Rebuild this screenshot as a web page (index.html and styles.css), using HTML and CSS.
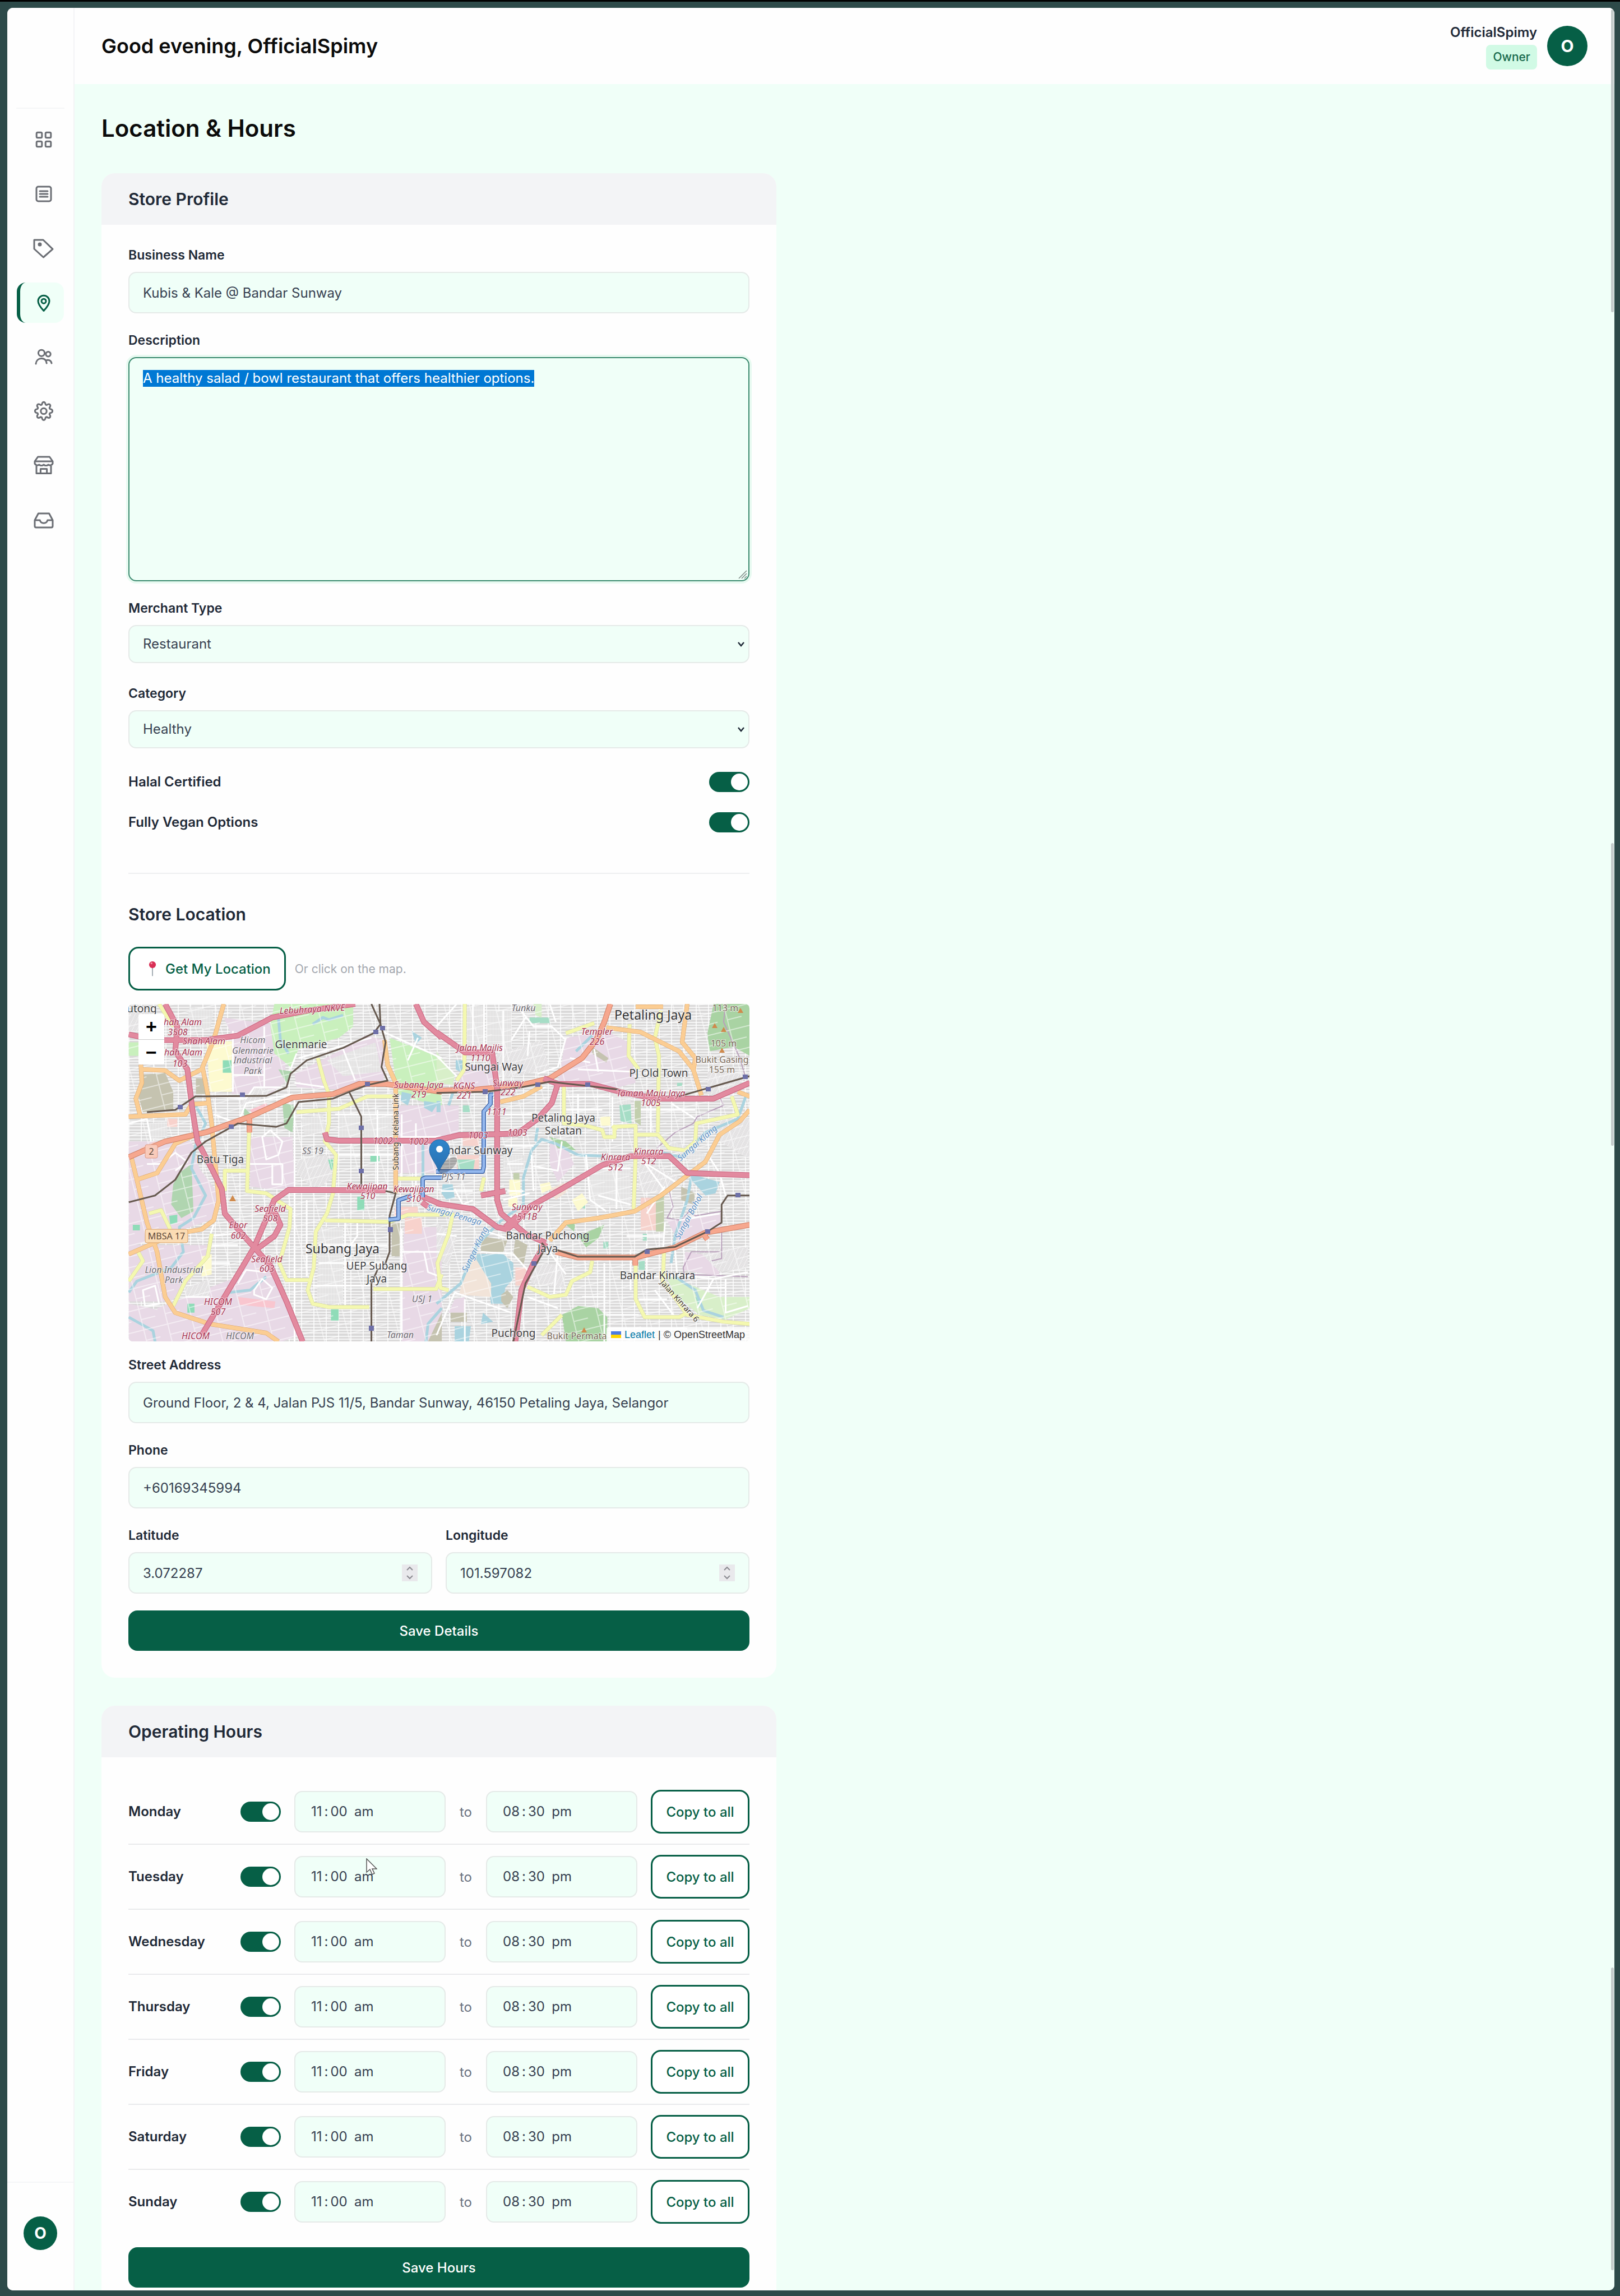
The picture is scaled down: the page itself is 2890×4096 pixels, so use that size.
FILE: index.html
```html
<!DOCTYPE html>
<html lang="en">
<head>
<meta charset="utf-8">
<title>Location &amp; Hours</title>
<link rel="stylesheet" href="styles.css">
</head>
<body>
<div class="window">
  <aside class="sidebar">
    <div class="sidebar-top"></div>
    <nav class="nav" aria-label="Main">
      <a class="nav-item" href="#dashboard" aria-label="Dashboard"><svg class="icon" viewBox="0 0 20 20"><rect x="3.600" y="3.600" width="4.800" height="4.800" rx="1"/><rect x="11.600" y="3.600" width="4.800" height="4.800" rx="1"/><rect x="3.600" y="11.600" width="4.800" height="4.800" rx="1"/><rect x="11.600" y="11.600" width="4.800" height="4.800" rx="1"/></svg></a>
      <a class="nav-item" href="#orders" aria-label="Orders"><svg class="icon" viewBox="0 0 20 20"><rect x="3.500" y="3.500" width="13" height="13" rx="1.600"/><path d="M6.500 7.500h7M6.500 10h7M6.500 12.500h7"/></svg></a>
      <a class="nav-item" href="#deals" aria-label="Deals"><svg class="icon" viewBox="0 0 20 20"><path d="M1.500 2.500h8l8.500 8.200-8.300 7.300-8.200-7.500z"/><circle cx="6.500" cy="6.500" r="1" class="dot"/></svg></a>
      <a class="nav-item active" href="#location" aria-label="Location" aria-current="page"><svg class="icon" viewBox="0 0 20 20"><path d="M10 17.200C7 14 5 11.300 5 8.600a5 5 0 0 1 10 0c0 2.700-2 5.400-5 8.600z"/><circle cx="10" cy="8.600" r="2"/></svg></a>
      <a class="nav-item" href="#team" aria-label="Team"><svg class="icon" viewBox="0 0 20 20"><circle cx="8" cy="6.400" r="2.800"/><circle cx="14" cy="7.400" r="2.100"/><path d="M3 16c.3-3 2.300-4.700 5-4.700 2.600 0 4.300 1.600 4.600 4.200M11.800 13.200c2-1.200 4.700-.6 5.200 2.300"/></svg></a>
      <a class="nav-item" href="#settings" aria-label="Settings"><svg class="icon" viewBox="0 0 20 20"><path d="M8.300 3.900C8.600 2.200 9 1.600 10 1.600s1.400.6 1.700 2.300l.9.400c1.400-1 2.200-1.100 2.900-.4s.6 1.500-.4 2.900l.4.900c1.700.3 2.300.9 2.300 1.900s-.6 1.600-2.300 1.900l-.4.900c1 1.400 1.100 2.200.4 2.900s-1.500.6-2.900-.4l-.9.400c-.3 1.700-.7 2.500-1.700 2.500s-1.400-.8-1.700-2.500l-.9-.4c-1.400 1-2.200 1.100-2.900.4s-.6-1.500.4-2.900l-.4-.9c-1.700-.3-2.300-.9-2.300-1.900s.6-1.600 2.300-1.900l.4-.9c-1-1.400-1.100-2.200-.4-2.900s1.500-.6 2.900.4z"/><circle cx="10" cy="9.700" r="2.600"/></svg></a>
      <a class="nav-item" href="#store" aria-label="Store"><svg class="icon" viewBox="0 0 20 20"><path d="M2 6l2.800-4h10.400L18 6v2a2.600 2.600 0 0 1-3.900 1 3.200 3.200 0 0 1-4.100 0 3.200 3.200 0 0 1-4.100 0A2.600 2.600 0 0 1 2 8zM2 6h16M3.500 9.500v7.300h13V9.500M7.200 16.800v-4h5.600v4"/></svg></a>
      <a class="nav-item" href="#inbox" aria-label="Inbox"><svg class="icon" viewBox="0 0 20 20"><path d="M2 10l3.200-6h9.600L18 10v5.200c0 .8-.5 1.300-1.300 1.300H3.300C2.500 16.500 2 16 2 15.200zM2 10h4.600c.4 1.700 1.400 2.600 3.400 2.600s3-.9 3.400-2.600H18"/></svg></a>
    </nav>
    <div class="sidebar-foot"><span class="avatar small">O</span></div>
  </aside>

  <div class="page">
    <header class="topbar">
      <p class="greeting">Good evening, OfficialSpimy</p>
      <div class="account">
        <div class="account-text">
          <span class="account-name">OfficialSpimy</span>
          <span class="badge">Owner</span>
        </div>
        <span class="avatar">O</span>
      </div>
    </header>

    <main class="content">
      <h1>Location &amp; Hours</h1>

      <section class="card">
        <h2 class="card-head">Store Profile</h2>
        <form class="card-body profile">
          <div class="field"><label for="name">Business Name</label><input class="control" id="name" type="text" value="Kubis &amp; Kale @ Bandar Sunway"></div>
          <div class="field"><label for="desc">Description</label><div class="area-wrap"><textarea class="control textarea" id="desc" spellcheck="false">A healthy salad / bowl restaurant that offers healthier options.</textarea><svg class="grip" viewBox="0 0 16 16"><path d="M1 15L15 1M6 15l9-9M11 15l4-4"/></svg></div></div>
          <div class="field pick"><label for="type">Merchant Type</label><div class="select-wrap"><select class="control select" id="type"><option>Restaurant</option></select><svg class="chevron" viewBox="0 0 14 12"><path d="M2 3l5 6 5-6"/></svg></div></div>
          <div class="field pick"><label for="cat">Category</label><div class="select-wrap"><select class="control select" id="cat"><option>Healthy</option></select><svg class="chevron" viewBox="0 0 14 12"><path d="M2 3l5 6 5-6"/></svg></div></div>
          <div class="switch-row"><label for="halal">Halal Certified</label><input class="toggle" id="halal" type="checkbox" checked></div>
          <div class="switch-row"><label for="vegan">Fully Vegan Options</label><input class="toggle" id="vegan" type="checkbox" checked></div>

          <h3 class="section-title">Store Location</h3>
          <div class="locate">
            <button class="btn outline locate-btn" type="button"><svg class="pin" viewBox="0 0 16 32"><path d="M8 14v17" stroke="#9aa3ab" stroke-width="2"/><circle cx="8" cy="8" r="7" fill="#d92f55"/><circle cx="6" cy="5" r="2" fill="#f08fa2"/></svg>Get My Location</button>
            <span class="hint">Or click on the map.</span>
          </div>

          <div class="map">
            <svg class="map-art" viewBox="0 0 1108 602" preserveAspectRatio="xMidYMid slice" role="img" aria-label="Map of Bandar Sunway">
              <defs>
                <pattern id="st1" width="22" height="16" patternUnits="userSpaceOnUse"><rect width="22" height="16" fill="#dad9d9"/><path d="M0 1h22M0 6h22M0 11h22M1 0v16" stroke="#fff" stroke-width="1.500"/></pattern>
                <pattern id="st2" width="14" height="28" patternUnits="userSpaceOnUse"><rect width="14" height="28" fill="#dad9d9"/><path d="M2 0v28M7 0v28M12 0v28M0 1h14" stroke="#fff" stroke-width="1.500"/></pattern>
                <pattern id="st3" width="20" height="18" patternUnits="userSpaceOnUse" patternTransform="rotate(28)"><rect width="20" height="18" fill="#dddbdc"/><path d="M0 1h20M0 7h20M0 13h20M1 0v18" stroke="#fff" stroke-width="1.500"/></pattern>
                <pattern id="st4" width="44" height="38" patternUnits="userSpaceOnUse" patternTransform="rotate(-14)"><path d="M0 1h44M18 0v38M18 20h26" stroke="#fff" stroke-width="2" fill="none"/></pattern>
                <g id="minor">
                  <g transform="matrix(.3607 0 0 .402 -6.5 -12)"><path d="M535 150V420M535 345H690M690 130V400M410 440L600 450 640 400 780 400M850 250L820 320M860 270L1220 180M840 380L1000 400M1080 230L1140 370M1270 150L1568 270M1450 180L1400 280M560 560L600 470 830 430M440 520L560 560M20 560L110 540 130 640M110 740L180 740 250 690 310 730 250 770M600 740H780M730 740V830H780M780 740V830M840 450V1528M1040 520H1330M1045 700H1330M1170 560V840M1250 500V850M1370 520V800M1370 620H1568M1440 560V850M1090 1000V1370M1150 1000L1150 1060 1100 1120M960 1100H1300M960 1180H1280M930 1280H1220M900 900V1240M1370 1030V1520M1370 1130H1568M1480 1130L1500 1220 1560 1240M640 1300L680 1250 730 1290 700 1340 640 1320zM560 1270L600 1210 700 1220M90 1300L150 1280 170 1360 100 1370zM440 1010L420 1060 540 1050M430 1100H560M430 1180H520M300 1330L420 1330M720 590L780 640 760 700 700 720 680 620z"/></g>
                  <g transform="matrix(.3607 0 0 .402 549.7 -12)"><path d="M0 130L100 30M0 260L100 350M180 30V240M235 30V260M330 60V380M400 40L480 130 570 130 640 190M370 190L440 90M460 150L450 260M560 30L590 110M500 340L600 310 640 180M660 270L760 290M700 320L960 330M780 230L800 330M870 440V640M640 440H860M640 500H820M700 430V560M300 470L540 400M330 520H520M340 660H480M350 740L430 740M350 860H430M470 700L480 860M480 750L600 770 620 640M740 700L760 900 840 950M760 760H960M800 880L960 920M890 740V940M1010 500H1280M1060 480V620M1160 470L1280 540M1000 700L1130 860M1040 740L1200 830M1350 710L1400 780 1430 880M1200 990L1400 960M1230 1080L1400 1010M1130 1000L1120 1120M1040 960L1130 840M940 1060H1120M960 1120V1300M1040 1090V1250M830 1180V1528M1000 1240L1140 1240M1000 1340H1140M1180 1120L1190 1230 1370 1250 1540 1220M1370 1250L1290 1380M1430 1250V1400L1540 1370M220 1130L380 1140 450 1210M90 1310L370 1400M90 1310L0 1500M140 1340V1528M560 1130L640 1230M600 1130L580 1330M450 1330L600 1380M720 1330H840M840 1410H1000M850 1470H1240M250 1040L350 1070M0 1050L100 1060M20 860H180M90 850L130 920 180 900M1080 1300L1180 1420M1300 1290H1430M330 900L460 870"/></g>
                </g>
                <g id="secondary">
                  <g transform="matrix(.3607 0 0 .402 -6.5 -12)"><path d="M170 30L240 130M955 270L985 370 1010 430 1010 560 990 640 1045 700 1030 870 1000 960 945 1040 935 1200 905 1300 930 1360 1010 1375H1210M850 510L1060 495 1200 440H1330M615 600L605 860 700 870 820 940 815 1020 765 1180 800 1255H910M600 770H495V860M120 960L180 945 225 1030M430 1050L410 1150 300 1260 240 1370M60 1120L90 1170 20 1260M990 990L1310 997 1400 965H1568M1350 805H1470M1230 1295H1540L1568 1230"/></g>
                  <g transform="matrix(.3607 0 0 .402 549.7 -12)"><path d="M140 30L138 320 100 370M640 160L780 115M955 120L950 260 1000 320M1110 60L1080 180 1100 260 1095 600M630 380V560L740 570 820 590 830 620H880V575L985 570V700L975 940M890 590L870 570M980 610H1095L1150 670 1230 680 1280 640 1285 560 1490 520 1460 440M235 800L220 860M0 965H80L60 1050 5 1180 20 1290 60 1300M450 1285L560 1330 640 1320 670 1260 760 1220 770 1170M985 1170V1340L1030 1420H1200L1240 1400M1125 1130L1120 1260 1240 1410 1420 1440 1549 1450M620 1410L520 1500"/></g>
                </g>
                <g id="primary">
                  <g transform="matrix(.3607 0 0 .402 -6.5 -12)"><path d="M490 30L440 190 385 310 410 430 430 560 450 760 465 900 440 990 380 1030 250 1050 20 1140M20 530L300 520 330 475 410 470M80 300L85 380 55 450 75 520M80 320L200 325 270 370 380 320M30 700L60 810 110 1000 160 1130 200 1330 250 1400 420 1450 700 1490 760 1528M60 810L160 780 250 650 350 610M1285 190L1300 300 1340 380V870"/></g>
                  <g transform="matrix(.3607 0 0 .402 549.7 -12)"><path d="M985 42H1120M840 135L1010 155 1200 240 1270 320 1310 435M1240 30L1215 200 1280 270 1270 330M315 465L430 440 520 395M560 1080L640 1000 800 980 980 950 1110 880 1330 730 1400 610 1500 550 1549 500M1490 420L1549 440"/></g>
                </g>
                <g id="trunk">
                  <g transform="matrix(.3607 0 0 .402 -6.5 -12)"><path d="M20 710L200 640 400 600 620 530 830 445 1030 430 1160 385 1290 385 1568 420M617 540V600"/></g>
                  <g transform="matrix(.3607 0 0 .402 549.7 -12)"><path d="M0 415L200 410 420 390 560 360 720 270 790 190 830 110 860 30M590 1130L700 1155H985L1180 1110 1330 1045 1549 1010M983 1155V1190M1320 1050L1340 1075"/></g>
                </g>
                <g id="motorway">
                  <g transform="matrix(.3607 0 0 .402 -6.5 -12)"><path d="M200 30L260 130 250 240 310 320 335 500 360 640 430 760 480 850 495 960 570 1040 640 1110 720 1190 800 1350 880 1528M20 165L150 190 400 190 560 170 730 90 900 60 1140 30M380 1500L640 1110 740 900 810 855 1290 857M990 600L1000 630 1060 637H1568M650 1120L740 1060 770 1010 740 950M1440 30L1480 110 1568 180M1460 880L1568 920M1470 910L1500 930"/></g>
                  <g transform="matrix(.3607 0 0 .402 549.7 -12)"><path d="M0 155L110 225 140 245H275L300 400V900L320 960 440 1050 540 1090M0 635L110 612 400 605 500 540 570 470 600 385 760 385 930 425 1100 450 1370 450 1549 380M0 915L180 940 300 1020 350 1030 390 1000 460 930 620 850 820 745 960 705 1150 705 1240 780 1549 790M530 360L600 385M220 880L340 860M400 970L340 1020M540 1090L480 1180 420 1300 390 1528"/></g>
                </g>
                <g id="rail">
                  <g transform="matrix(.3607 0 0 .402 -6.5 -12)"><path d="M110 510L250 500 350 440 700 438 800 400 820 340 900 280 1080 225 1230 160 1265 120 1220 30M1260 30L1265 120 1290 200 1270 310 1300 370 1200 390 1110 420 1170 530V840M1110 420L1030 450 860 465 800 560 750 575 560 560 400 640 330 690 250 810 150 880 20 910M1290 860L1340 870 1310 970V1130L1290 1180M1250 1210L1220 1270V1528"/></g>
                  <g transform="matrix(.3607 0 0 .402 549.7 -12)"><path d="M0 425L240 420 420 400 560 375 760 395 900 410M1200 440L1549 350M590 1120L700 1152H980L1040 1120 1180 1108 1340 1040 1410 1000V920L1440 880H1549M520 1090L540 1110 440 1270 380 1528"/></g>
                </g>
                <linearGradient id="mk" x1="0" y1="0" x2="0" y2="1"><stop offset="0" stop-color="#2e86cb"/><stop offset="1" stop-color="#2a6fb0"/></linearGradient>
              </defs>
              <rect width="1108" height="602" fill="url(#st1)"/>
              <g transform="matrix(.3607 0 0 .402 -6.5 -12)">
                <path fill="#e8d9e6" d="M490 90L720 120 790 250 800 370 720 430H530V170zM840 340L1080 230 1190 170 1290 190 1280 370 1050 410 850 400zM20 640H330L370 760 460 870 450 980 230 1050 20 1110zM20 1100H420L420 1130 330 1250 230 1350 20 1350zM160 1380L560 1240 640 1120 760 1250 860 1500 780 1528 200 1528zM620 620H830L840 850H700L620 840zM1380 1020H1568V1528H1370zM1350 480H1568V780H1350zM20 1360L230 1400 300 1528H20z"/>
                <path fill="#c9f0bd" d="M740 30H1130V130L1060 180 860 230 820 310 740 250 720 120zM1310 180L1568 270V490L1350 430zM20 200H70V260H20z"/>
                <path fill="#c5c3b0" d="M85 345L200 335 240 420V500L90 510 65 430zM352 360H410V430H352zM1320 1000H1360V1150H1320zM1500 1528L1568 1400V1528z"/>
                <path fill="#fdfad0" d="M405 195H530V420H420zM380 1150L430 1140V1230L380 1240z"/>
                <path fill="#b0d5b0" d="M270 780L330 740 340 950 280 980 230 920 240 830zM760 320L830 330 800 380zM590 490L625 520 590 540zM780 470L840 480 830 600 790 580z"/>
                <path fill="#8fdcb8" d="M485 280H528V335H485zM1215 700H1260V730H1215zM1000 720H1030V765H1000zM1095 540H1125V565H1095zM1150 885H1185V945H1150zM1020 1385H1058V1435H1020zM220 970L260 965V1000L225 1010zM310 1360H345V1400H310zM40 1010H75V1035H40z"/>
                <path fill="#f9c6cf" d="M560 1330L745 1350 740 1380 570 1365zM620 500L700 470 720 500 640 530z"/>
                <path fill="#f8d2cc" d="M1340 930H1450V970H1330zM1385 980H1470V1050H1385zM75 670L150 640V680L80 700zM210 540H260V575H210z"/>
                <path fill="url(#st2)" d="M1000 280L1240 200 1270 330 1080 350zM870 540L980 520 1000 600 890 610zM1060 520H1320V620H1060zM120 560L210 550V620L120 630zM320 40L440 60 420 150 310 110zM960 1020H1080V1360H950z"/>
                <path fill="url(#st3)" d="M850 720L1000 700 1030 800 940 860 850 780zM300 1290L420 1250 420 1330 300 1330zM560 480L650 400 740 410 620 480zM20 60L150 70 190 150 20 150z"/>
                <path fill="#aad3df" d="M1370 420L1420 430 1400 480 1365 460zM1480 460L1550 470 1520 510 1480 490zM1420 150L1470 180 1440 210z"/>
                <path class="river" d="M350 480L400 560 350 660 330 760 400 880 340 980 270 1020 290 1130 230 1200 60 1260 20 1310M20 1420L140 1480 150 1528M520 1310L620 1300 700 1240M760 90L770 190 810 250M1568 1380L1500 1450 1490 1528M1475 640V830M930 120L980 90 1010 100 1080 80"/>
              </g>
              <g transform="matrix(.3607 0 0 .402 549.7 -12)">
                <path fill="#e8d9e6" d="M130 300H290L280 400H100zM640 180L840 150 950 200 985 380 900 400 600 380zM560 650L640 660 680 740 600 820 560 740zM1140 990L1410 960V1020L1200 1090zM1230 1130L1390 1150 1400 1240 1220 1210zM0 480H110V620H0zM90 1340L140 1330V1400H60z"/>
                <path fill="#d8efc9" d="M0 240L90 350 80 390 0 380zM1130 1230L1240 1270 1400 1330 1549 1330V1380L1430 1430 1300 1410 1180 1320zM480 30H520V90L490 80z"/>
                <path fill="#a9d3a3" d="M1370 30H1549V260L1470 220 1350 240 1340 160zM620 1410L700 1370 800 1380 845 1420V1528H640zM560 620L640 640 690 680 600 670zM700 1060L830 1010 800 1070 740 1110zM640 1010L690 990 680 1040z"/>
                <path fill="#aad3df" d="M200 1140L330 1140 380 1180V1250L340 1290 330 1360 270 1360 250 1240 190 1190zM95 280L130 280 135 340 95 320zM30 830L80 830 90 890 50 900 25 870zM775 815L830 815 825 840 780 845zM1240 780L1400 820 1380 870 1330 880 1270 820zM90 1460L170 1460 160 1528H90zM230 1400L280 1440 220 1450zM0 460H20V510H0z"/>
                <path fill="#c5c3b0" d="M220 1060L350 1080 330 1130H220zM390 1070L450 1100 430 1190 380 1140zM320 1320L350 1300 380 1330 350 1380 320 1350zM770 220L850 270 840 290 770 250zM70 1400H150V1440H70zM1210 840L1280 870 1270 920 1210 900z"/>
                <path fill="#f2e4d9" d="M180 1140L270 1270 270 1330 110 1320 150 1210zM560 850L640 820 650 860 590 900z"/>
                <path fill="#f6d3cd" d="M1010 890H1090V1035H1010zM390 1200H450L420 1280H390zM100 700H210V780H100zM130 620H210V660H130z"/>
                <path fill="#c2cfae" d="M1085 880H1125V1040H1085zM980 460H1010V570L980 550zM380 780H410V870H380z"/>
                <path fill="#a6ddc6" d="M905 480L960 475 965 560 910 550zM100 720H190L180 780H110zM1020 1050H1040V1080H1020zM825 1085H850V1115H825zM1000 1170H1030V1210H1000zM1280 1330L1310 1340 1300 1380zM700 910L735 915V940L700 925zM130 480H165V510H130zM460 90H560V115H460zM1190 380H1215V395H1190z"/>
                <path fill="#fdfad0" d="M360 810H415V880H360zM810 530H860V570H810zM510 830L560 820 570 850 520 870zM670 900L720 870 750 910 700 950zM355 890H400V930H355z"/>
                <path fill="url(#st2)" d="M150 40H235V270H150zM250 60H370V240H250zM860 430H960V475H860zM330 700H460V770H330zM760 740H960V930H760zM1140 630L1340 700 1310 740 1180 690z"/>
                <path fill="url(#st3)" d="M1000 720L1200 800 1120 870 1000 860zM460 1190L640 1180 630 1290 470 1270zM230 270L520 190 560 320 330 360zM1400 540H1549V720L1400 640zM1290 1120L1540 1110V1200L1400 1220zM1340 330L1540 340 1440 440 1340 430zM0 1000L100 1060 60 1200 0 1150z"/>
                <path class="river" d="M430 930L430 800 470 680 520 630 590 650 700 700 830 705M500 580L490 640M1160 1180L1180 1060 1240 900 1260 800M1120 690L1210 710 1330 600 1490 540 1530 440M0 1360L120 1270 200 1100 320 990 430 920M1180 1240L1280 1300 1320 1390 1420 1420M770 170L690 240M90 400L60 480"/>
                <path class="boundary" d="M1090 670L1180 600 1270 560 1290 530 1420 480 1400 440M1430 30L1420 110 1500 270 1530 360M1410 950L1280 970 1250 950 1210 990 1140 980 1170 930 1150 860M1400 1130H1260L1220 1200 1225 1230 1540 1240M1410 1020V1160L1360 1170"/>
              </g>
              <rect width="1108" height="602" fill="url(#st4)" opacity=".5"/>
              <use href="#minor" class="minor"/>
              <use href="#secondary" class="secondary-case"/><use href="#secondary" class="secondary"/>
              <use href="#primary" class="primary-case"/><use href="#primary" class="primary"/>
              <use href="#trunk" class="trunk-case"/><use href="#trunk" class="trunk"/>
              <use href="#motorway" class="motorway-case"/><use href="#motorway" class="motorway"/>
              <use href="#rail" class="rail"/>
              <path class="transit-case" d="M549 299H632L634 290V192L646 178V162H651M549 299M464 385L482 383V350L505 342M525 345V312L530 310H560"/>
              <path class="transit" d="M549 299H632L634 290V192L646 178V162H651M464 385L482 383V350L505 342M525 345V312L530 310H560"/>
              <path fill="#6e70a8" d="M88 180h9v8h-9zM199 158h9v8h-9zM437 46h9v8h-9zM449 39h9v8h-9zM179 215h9v8h-9zM422 139h9v8h-9zM411 217h9v8h-9zM411 294h9v8h-9zM463 398h9v9h-9zM429 574h9v9h-9zM632 152h9v9h-9zM726 140h9v8h-9zM815 140h9v8h-9zM1030 148h9v8h-9zM1096 126h9v8h-9zM1083 337h9v8h-9zM1029 402h9v8h-9zM921 438h9v8h-9zM719 459h9v8h-9z"/>
              <path fill="#cf8a4d" d="M1041 43l5-9 5 9zM1057 50l5-9 5 9zM1087 16l5-9 5 9zM1054 87l5-9 5 9zM808 586l5-9 5 9zM180 352l6-11 6 11z"/>
              <rect class="shield-red" x="30" y="251" width="22" height="24" rx="3"/><rect class="shield-tan" x="30" y="402" width="76" height="24" rx="3"/>
              <g class="lbl exit">
                <text x="97" y="38">hah Alam</text><text x="88" y="56">3508</text><text x="135" y="72">Shah Alam</text><text x="98" y="92">hah Alam</text><text x="92" y="112">103</text>
                <text x="328" y="15" transform="rotate(-3 328 8)">Lebuhraya NKVE</text><text x="518" y="150">Subang Jaya</text><text x="518" y="167">219</text><text x="454" y="250">1002</text><text x="518" y="251">1002</text>
                <text x="426" y="331">Kewajipan</text><text x="427" y="348">510</text><text x="509" y="336">Kewajipan</text><text x="509" y="353">510</text><text x="253" y="371">Seafield</text><text x="253" y="388">508</text>
                <text x="196" y="400">Ebor</text><text x="196" y="419">602</text><text x="247" y="461">Seafield</text><text x="247" y="478">603</text><text x="160" y="537">HICOM</text><text x="160" y="555">507</text><text x="120" y="598">HICOM</text>
                <text x="836" y="55">Templer</text><text x="836" y="73">226</text><text x="627" y="84">Jalan Majlis</text><text x="628" y="102">1110</text><text x="599" y="152">KGNS</text><text x="599" y="169">221</text><text x="677" y="147">Sunway</text><text x="677" y="163">222</text><text x="657" y="198">1111</text>
                <text x="932" y="165">Taman Maju Jaya</text><text x="932" y="182">1005</text><text x="624" y="240">1003</text><text x="694" y="235">1003</text><text x="869" y="279">Kinrara</text><text x="869" y="297">512</text><text x="928" y="269">Kinrara</text><text x="928" y="286">512</text><text x="711" y="368">Sunway</text><text x="711" y="385">511B</text>
              </g>
              <g class="lbl area">
                <text x="222" y="70">Hicom</text><text x="222" y="89">Glenmarie</text><text x="222" y="106">Industrial</text><text x="222" y="125">Park</text><text x="329" y="268">SS 19</text><text x="81" y="480">Lion Industrial</text><text x="81" y="498">Park</text><text x="199" y="598">HICOM</text><text x="524" y="532">USJ 1</text><text x="485" y="596">Taman</text><text x="705" y="13">Tunku</text><text x="580" y="314">PJS 11</text>
              </g>
              <g class="lbl peak"><text x="1065" y="13">113 m</text><text x="1062" y="76">105 m</text><text x="1059" y="105">Bukit Gasing</text><text x="1059" y="123">155 m</text><text x="800" y="598">Bukit Permata</text></g>
              <g class="lbl water"><text transform="translate(1018 252) rotate(-41)">Sungai Klang</text><text transform="translate(1004 382) rotate(-62)">Sungai Bohol</text><text transform="translate(623 440) rotate(-64)">Sungai Klang</text><text transform="translate(580 381) rotate(16)">Sungai Penaga</text></g>
              <g class="lbl street"><text transform="translate(482 228) rotate(-90)">Subang - Kelana Link</text><text transform="translate(980 533) rotate(48)">Jalan Kinrara 6</text></g>
              <g class="lbl town">
                <text x="24" y="15">utong</text><text x="308" y="79">Glenmarie</text><text x="164" y="284">Batu Tiga</text><text x="443" y="474">UEP Subang</text><text x="443" y="497">Jaya</text><text x="652" y="119">Sungai Way</text><text x="946" y="130">PJ Old Town</text><text x="776" y="210">Petaling Jaya</text><text x="776" y="233">Selatan</text><text x="616" y="268">Bandar Sunway</text><text x="748" y="420">Bandar Puchong</text><text x="748" y="443">Jaya</text><text x="944" y="491">Bandar Kinrara</text><text x="687" y="594">Puchong</text>
              </g>
              <g class="lbl city"><text x="382" y="445">Subang Jaya</text><text x="936" y="28">Petaling Jaya</text></g>
              <g class="lbl shield"><text x="41" y="269">2</text><text x="68" y="420">MBSA 17</text></g>
              <ellipse cx="570" cy="288" rx="20" ry="9" fill="#000" opacity=".25" transform="rotate(-40 570 288)"/>
              <path d="M554 299C548 282 537 273 537 260a18 18 0 0 1 36 0C573 273 561 282 554 299z" fill="url(#mk)" stroke="#2268a5"/><circle cx="555" cy="259" r="6" fill="#fff"/>
            </svg>
            <div class="zoom"><button type="button" aria-label="Zoom in">+</button><button type="button" aria-label="Zoom out">−</button></div>
            <div class="attribution"><svg class="flag" viewBox="0 0 18 12"><path fill="#4c7be1" d="M0 0h18v6H0z"/><path fill="#ffd500" d="M0 6h18v6H0z"/></svg><a href="#leaflet">Leaflet</a><span>| © OpenStreetMap</span></div>
          </div>

          <div class="field"><label for="addr">Street Address</label><input class="control" id="addr" type="text" value="Ground Floor, 2 &amp; 4, Jalan PJS 11/5, Bandar Sunway, 46150 Petaling Jaya, Selangor"></div>
          <div class="field"><label for="phone">Phone</label><input class="control" id="phone" type="tel" value="+60169345994"></div>
          <div class="coords">
            <div class="field"><label for="lat">Latitude</label><div class="number-wrap"><input class="control" id="lat" type="number" step="any" value="3.072287"><svg class="spin" viewBox="0 0 28 30"><path d="M9 10l5-5 5 5M9 20l5 5 5-5"/></svg></div></div>
            <div class="field"><label for="lng">Longitude</label><div class="number-wrap"><input class="control" id="lng" type="number" step="any" value="101.597082"><svg class="spin" viewBox="0 0 28 30"><path d="M9 10l5-5 5 5M9 20l5 5 5-5"/></svg></div></div>
          </div>
          <button class="btn solid" type="button">Save Details</button>
        </form>
      </section>

      <section class="card">
        <h2 class="card-head">Operating Hours</h2>
        <form class="card-body hours">
          <div class="day"><label for="d1">Monday</label><input class="toggle" id="d1" type="checkbox" checked><input class="control time" type="time" value="11:00" aria-label="Monday opens"><span class="to">to</span><input class="control time" type="time" value="20:30" aria-label="Monday closes"><button class="btn outline" type="button">Copy to all</button></div>
          <div class="day"><label for="d2">Tuesday</label><input class="toggle" id="d2" type="checkbox" checked><input class="control time" type="time" value="11:00" aria-label="Tuesday opens"><span class="to">to</span><input class="control time" type="time" value="20:30" aria-label="Tuesday closes"><button class="btn outline" type="button">Copy to all</button><svg class="cursor" viewBox="0 0 20 31"><path d="M1 1v24l6-5 4 9 4-2-4-8h8z"/></svg></div>
          <div class="day"><label for="d3">Wednesday</label><input class="toggle" id="d3" type="checkbox" checked><input class="control time" type="time" value="11:00" aria-label="Wednesday opens"><span class="to">to</span><input class="control time" type="time" value="20:30" aria-label="Wednesday closes"><button class="btn outline" type="button">Copy to all</button></div>
          <div class="day"><label for="d4">Thursday</label><input class="toggle" id="d4" type="checkbox" checked><input class="control time" type="time" value="11:00" aria-label="Thursday opens"><span class="to">to</span><input class="control time" type="time" value="20:30" aria-label="Thursday closes"><button class="btn outline" type="button">Copy to all</button></div>
          <div class="day"><label for="d5">Friday</label><input class="toggle" id="d5" type="checkbox" checked><input class="control time" type="time" value="11:00" aria-label="Friday opens"><span class="to">to</span><input class="control time" type="time" value="20:30" aria-label="Friday closes"><button class="btn outline" type="button">Copy to all</button></div>
          <div class="day"><label for="d6">Saturday</label><input class="toggle" id="d6" type="checkbox" checked><input class="control time" type="time" value="11:00" aria-label="Saturday opens"><span class="to">to</span><input class="control time" type="time" value="20:30" aria-label="Saturday closes"><button class="btn outline" type="button">Copy to all</button></div>
          <div class="day"><label for="d7">Sunday</label><input class="toggle" id="d7" type="checkbox" checked><input class="control time" type="time" value="11:00" aria-label="Sunday opens"><span class="to">to</span><input class="control time" type="time" value="20:30" aria-label="Sunday closes"><button class="btn outline" type="button">Copy to all</button></div>
          <button class="btn solid" type="button">Save Hours</button>
        </form>
      </section>
    </main>
  </div>
  <div class="scroll-thumb first"></div>
  <div class="scroll-thumb second"></div>
  <div class="scroll-thumb third"></div>
</div>
<script src="script.js"></script>
</body>
</html>
```
FILE: script.js
```js
// Open with the description ready to be overwritten.
document.getElementById('desc').select();
document.getElementById('desc').focus({ preventScroll: true });
```
FILE: styles.css
```css
* { box-sizing: border-box; }

:root {
  --green: #065f46;
  --ink: #1f2937;
  --text: #374151;
  --mint: #f0fff8;
  --line: #e5eae8;
}

body {
  margin: 0;
  height: 100vh;
  padding: 11px 10px 10px 13px;
  background: #2d4a49;
  border-top: 3px solid #000;
  font-family: Inter, "Liberation Sans", sans-serif;
  font-size: 24px;
  color: var(--text);
}

.window {
  position: relative;
  display: flex;
  height: 100%;
  overflow: hidden;
  border-radius: 10px;
  background: #fff;
}

/* Sidebar */
.sidebar {
  flex: none;
  width: 120px;
  display: flex;
  flex-direction: column;
  border-right: 2px solid #f3f4f6;
  background: #fefefe;
}
.sidebar-top { height: 180px; margin: 0 16px; border-bottom: 2px solid #f5f6f7; }
.nav { flex: 1; display: flex; flex-direction: column; gap: 25px; padding: 19px 17px; }
.nav-item {
  height: 72px;
  display: flex;
  align-items: center;
  justify-content: center;
  border-left: 6px solid transparent;
  border-radius: 16px;
  padding-left: 6px;
  color: #6b6e74;
}
.nav-item.active { background: var(--mint); border-left-color: var(--green); color: var(--green); }
.icon { width: 40px; height: 40px; fill: none; stroke: currentColor; stroke-width: 1.5; stroke-linejoin: round; stroke-linecap: round; }
.icon .dot { fill: currentColor; }
.sidebar-foot { display: flex; justify-content: center; padding: 60px 0 72px; border-top: 2px solid #f5f6f7; }

.avatar {
  display: flex;
  align-items: center;
  justify-content: center;
  width: 72px;
  height: 72px;
  border-radius: 50%;
  background: var(--green);
  color: #fff;
  font-size: 30px;
  font-weight: 700;
}
.avatar.small { width: 60px; height: 60px; font-size: 28px; }

/* Page */
.page { flex: 1; min-width: 0; background: var(--mint); overflow: hidden; }
.topbar {
  display: flex;
  align-items: center;
  justify-content: space-between;
  height: 136px;
  padding: 0 48px;
  background: #fefefe;
}
.greeting { margin: 0; font-size: 36px; font-weight: 600; color: #0b0b0b; }
.account { display: flex; align-items: center; gap: 18px; }
.account-text { display: flex; flex-direction: column; align-items: flex-end; gap: 8px; padding-top: 4px; }
.account-name { font-weight: 600; line-height: 28px; color: var(--ink); }
.badge { padding: 0 12px; border-radius: 8px; background: #d1fae5; color: #17694c; font-size: 21px; font-weight: 500; line-height: 44px; }

.content { padding: 54px 48px; }
h1 { margin: 0 0 55px; font-size: 42px; line-height: 50px; font-weight: 600; color: #0b0b0b; }

.card { max-width: 1204px; margin-bottom: 50px; border-radius: 24px; overflow: hidden; background: #fefefe; }
.card-head { margin: 0; padding: 0 48px; font-size: 30px; font-weight: 600; line-height: 92px; color: var(--ink); background: #f3f4f6; }
.card-body { display: flex; flex-direction: column; padding: 40px 48px 48px; }

.field { display: flex; flex-direction: column; gap: 16px; margin-bottom: 34px; }
.field.pick { margin-bottom: 40px; }
label { font-size: 24px; font-weight: 600; line-height: 28px; color: var(--ink); }
.field label { font-size: 23px; }

.control {
  display: block;
  width: 100%;
  height: 74px;
  margin: 0;
  padding: 0 24px;
  border: 2px solid var(--line);
  border-radius: 14px;
  outline: none;
  background: var(--mint);
  color: var(--text);
  font: 400 24px/30px Inter, "Liberation Sans", sans-serif;
}
.textarea { height: 400px; padding: 21px 24px; border-color: #3d8b70; resize: none; box-shadow: 0 0 0 4px #e8faf1; }
.textarea::selection { background: #0078d4; color: #fff; }

.area-wrap, .select-wrap, .number-wrap { display: grid; align-items: center; }
.area-wrap > *, .select-wrap > *, .number-wrap > * { grid-area: 1 / 1; }
.grip { align-self: end; justify-self: end; width: 16px; height: 16px; margin: 0 4px 4px 0; stroke: #7d8a85; stroke-width: 1.5; pointer-events: none; }
.select { height: 68px; appearance: none; }
.chevron { justify-self: end; width: 14px; height: 12px; margin-right: 8px; fill: none; stroke: var(--ink); stroke-width: 2.5; pointer-events: none; }
input[type="number"] { appearance: textfield; }
.spin { justify-self: end; width: 28px; height: 30px; margin-right: 26px; background: #e9e9ec; fill: none; stroke: #8a8a90; stroke-width: 2; pointer-events: none; }

.switch-row { display: flex; align-items: center; justify-content: space-between; height: 36px; margin: 2px 0 34px; }
.toggle { appearance: none; flex: none; width: 72px; height: 36px; margin: 0; padding: 3px; border-radius: 18px; background: var(--green); }
.toggle::before { content: ""; display: block; width: 30px; height: 30px; border-radius: 50%; background: #fff; }
.toggle:checked::before { margin-left: auto; }

.section-title { margin: 38px 0 40px; padding-top: 54px; border-top: 2px solid #eeeff1; font-size: 30px; font-weight: 600; line-height: 36px; color: var(--ink); }

.btn { height: 72px; padding: 0 24px; border: 0; border-radius: 16px; font: 500 24px Inter, "Liberation Sans", sans-serif; white-space: nowrap; }
.btn.solid { background: var(--green); color: #fff; }
.btn.outline { height: 78px; border: 3px solid var(--green); border-radius: 18px; background: #fff; color: var(--green); }
.locate { display: flex; align-items: center; gap: 16px; margin-bottom: 24px; }
.locate-btn { display: flex; align-items: center; gap: 15px; }
.pin { width: 16px; height: 28px; margin-left: 8px; }
.hint { font-size: 21px; color: #a3a7ae; }

/* Map */
.map { position: relative; height: 602px; margin-bottom: 28px; border-radius: 8px; overflow: hidden; }
.map-art { display: block; width: 100%; height: 100%; }
.map-art path { vector-effect: non-scaling-stroke; }
.minor, .secondary, .secondary-case, .primary, .primary-case, .trunk, .trunk-case, .motorway, .motorway-case, .rail, .transit, .transit-case, .river, .boundary { fill: none; stroke-linejoin: round; }
.minor { stroke: #fff; stroke-width: 3; }
.secondary { stroke: #f4f8b0; stroke-width: 6; }
.secondary-case { stroke: #d3d59a; stroke-width: 7; }
.primary { stroke: #fbcd93; stroke-width: 7; }
.primary-case { stroke: #d9a066; stroke-width: 8; }
.trunk { stroke: #f6a78e; stroke-width: 8; }
.trunk-case { stroke: #cf7d62; stroke-width: 10; }
.motorway { stroke: #e28a9f; stroke-width: 8; }
.motorway-case { stroke: #c9607c; stroke-width: 10; }
.rail { stroke: #66594f; stroke-width: 3; }
.transit-case { stroke: #3c64a8; stroke-width: 8; }
.transit { stroke: #94b8ee; stroke-width: 5; }
.river { stroke: #aad3df; stroke-width: 5; }
.boundary { stroke: #b9a0bb; stroke-width: 2; }
.lbl { font-family: "Noto Sans", sans-serif; text-anchor: middle; paint-order: stroke; stroke: #ffffffb0; stroke-width: 2px; stroke-linejoin: round; }
.exit { font-size: 16px; font-style: italic; fill: #a83250; }
.area { font-size: 16px; font-style: italic; fill: #6e6a72; }
.peak { font-size: 16px; fill: #7a6a58; }
.water { font-size: 15px; font-style: italic; fill: #5b8fc4; }
.street { font-size: 14px; fill: #3a3226; }
.town { font-size: 19px; fill: #3f3f42; }
.city { font-size: 23px; fill: #333336; }
.shield { font-size: 16px; fill: #5f4a3c; stroke: none; }
.shield-red { fill: #f9cbbb; stroke: #dc9a86; }
.shield-tan { fill: #fbdcb4; stroke: #d9a066; }

.zoom { position: absolute; top: 18px; left: 18px; width: 46px; border-radius: 4px; background: #fff; overflow: hidden; }
.zoom button { display: block; width: 100%; height: 45px; padding: 0; border: 0; background: #fff; font: 700 34px/45px "Liberation Sans", sans-serif; color: #000; }
.zoom button + button { border-top: 1px solid #ccc; }
.attribution { position: absolute; right: 0; bottom: 0; display: flex; align-items: center; gap: 6px; height: 24px; padding: 0 8px; background: #ffffffd0; font: 18px "Liberation Sans", sans-serif; color: #333; }
.attribution a { color: #0078a8; text-decoration: none; }
.flag { width: 18px; height: 12px; }

.coords { display: grid; grid-template-columns: 1fr 1fr; gap: 24px; }
.coords .field { margin-bottom: 30px; }

/* Opening hours */
.hours { padding-top: 40px; }
.day {
  position: relative;
  display: grid;
  grid-template-columns: 1fr 72px 270px 24px 270px 176px;
  align-items: center;
  gap: 24px;
  padding: 18px 0;
  border-bottom: 2px solid #e9eaec;
}
.day:nth-of-type(7) { border-bottom: 0; margin-bottom: 24px; }
.day .btn { padding: 0; }
.time::-webkit-calendar-picker-indicator { display: none; }
.time::-webkit-datetime-edit-hour-field,
.time::-webkit-datetime-edit-minute-field,
.time::-webkit-datetime-edit-ampm-field { padding: 0 4px; }
.time::-webkit-datetime-edit-ampm-field { text-transform: lowercase; }
.to { text-align: center; font-size: 24px; color: #6b7280; }
.cursor { position: absolute; top: 24px; left: 424px; width: 20px; height: 31px; fill: #fff; stroke: #555; stroke-width: 1.5; }

/* Overlay scroll thumbs */
.scroll-thumb { position: absolute; right: 1px; width: 5px; height: 540px; border-radius: 3px; background: #c4cccb; }
.scroll-thumb.first { top: 3px; }
.scroll-thumb.second { top: 1490px; }
.scroll-thumb.third { bottom: 36px; }
```
